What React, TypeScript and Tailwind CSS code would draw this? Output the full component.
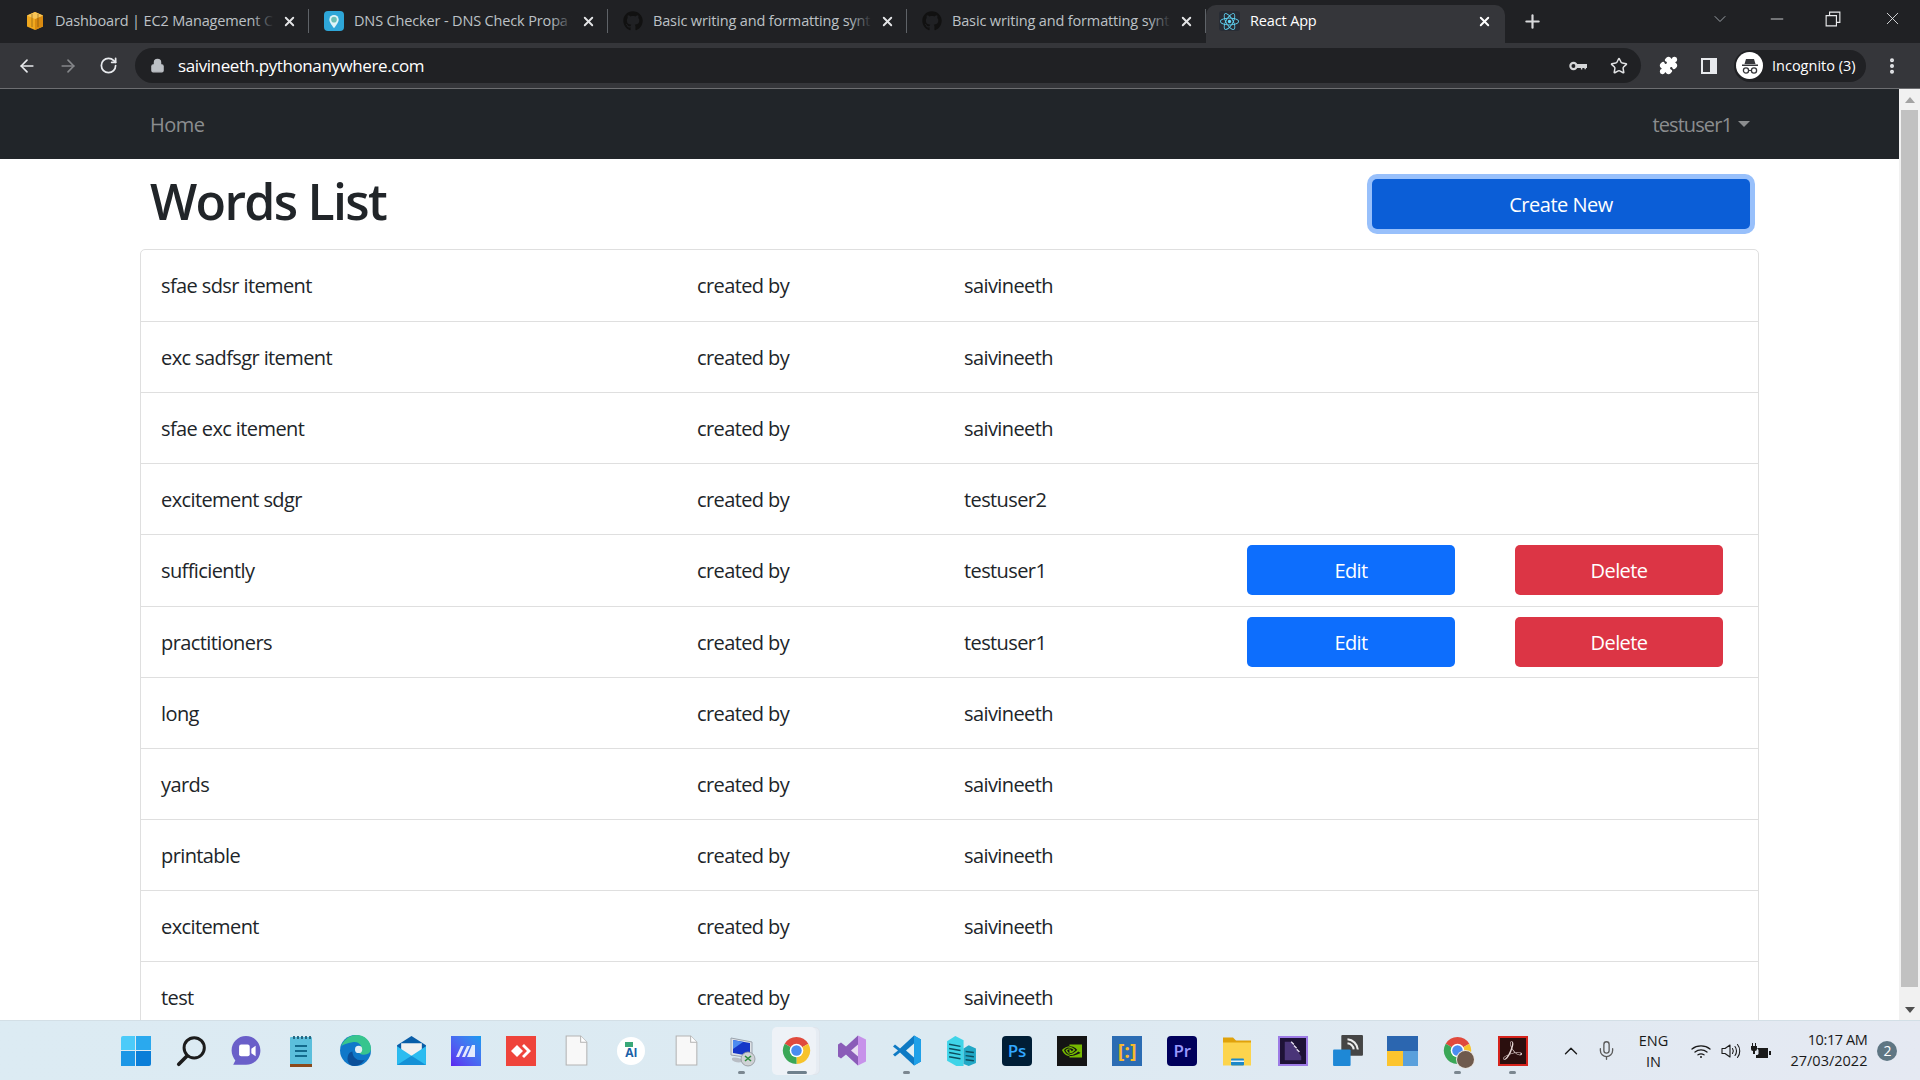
import { ArrowLeft, ArrowRight, RotateCw, Lock, Star, Puzzle, EllipsisVertical, X, Plus, ChevronDown, ChevronUp, Minus, Mic } from "lucide-react";
import { FaGithub, FaReact } from "react-icons/fa";
import { SiNvidia, SiAdobeacrobatreader } from "react-icons/si";

const words = [
  { word: "sfae sdsr itement", user: "saivineeth", tall: true },
  { word: "exc sadfsgr itement", user: "saivineeth" },
  { word: "sfae exc itement", user: "saivineeth" },
  { word: "excitement sdgr", user: "testuser2" },
  { word: "sufficiently", user: "testuser1", own: true, tall: true },
  { word: "practitioners", user: "testuser1", own: true },
  { word: "long", user: "saivineeth" },
  { word: "yards", user: "saivineeth" },
  { word: "printable", user: "saivineeth" },
  { word: "excitement", user: "saivineeth" },
  { word: "test", user: "saivineeth" },
];

const AwsIcon = () => (
  <svg viewBox="0 0 20 20" className="h-[20px] w-[20px]">
    <path d="M10 1 18 4.500V15.500L10 19 2 15.500V4.500Z" fill="#f0a81e" />
    <path d="M10 8V19L18 15.500V4.500Z" fill="#d98a10" />
    <path d="M2 4.500 10 1 18 4.500 10 8Z" fill="#f8c555" />
    <path d="M7 3v13M13 3v13" stroke="#5b3d0a" strokeWidth="0.8" opacity="0.6" />
  </svg>
);

const DnsIcon = () => (
  <div className="flex h-[20px] w-[20px] items-center justify-center rounded-[4px] bg-[#2ea6d8]">
    <svg viewBox="0 0 12 16" className="h-[15px] w-[12px]">
      <path d="M6 1a5 5 0 0 1 5 5c0 3-5 9-5 9S1 9 1 6a5 5 0 0 1 5-5Z" fill="#dff4f8" />
      <circle cx="6" cy="6" r="3" fill="#6bbfb5" />
    </svg>
  </div>
);

const tabs = [
  { title: "Dashboard | EC2 Management C", icon: <AwsIcon /> },
  { title: "DNS Checker - DNS Check Propa", icon: <DnsIcon /> },
  { title: "Basic writing and formatting synt", icon: <FaGithub className="h-[20px] w-[20px] text-[#111]" /> },
  { title: "Basic writing and formatting synt", icon: <FaGithub className="h-[20px] w-[20px] text-[#111]" /> },
];

const TabStrip = () => (
  <div className="flex h-[43px] items-end bg-[#202124] pl-[10px]">
    {tabs.map((tab, i) => (
      <div key={i} className="flex h-[38px] w-[299px] items-center pb-[6px] pl-[14px]">
        <div className="flex w-[21px] shrink-0 justify-center">{tab.icon}</div>
        <div className="relative ml-[10px] w-[219px] overflow-hidden whitespace-nowrap text-[14.5px] tracking-[-0.15px] text-[#bdc1c6]">
          {tab.title}
          <div className="absolute inset-y-0 right-0 w-[22px] bg-gradient-to-r from-transparent to-[#202124]" />
        </div>
        <X className="ml-auto h-[15px] w-[15px] text-[#e3e4e6]" strokeWidth={3} />
        <div className="ml-[11px] h-[24px] w-px shrink-0 bg-[#5f6368]" />
      </div>
    ))}
    <div className="flex h-[38px] w-[299px] items-center rounded-t-[10px] bg-[#35363a] pb-[6px] pl-[13px] pr-[10px]">
      <div className="flex h-[20px] w-[21px] shrink-0 items-center justify-center rounded-[3px] bg-[#282c34]">
        <FaReact className="h-[19px] w-[19px] text-[#61dafb]" />
      </div>
      <span className="ml-[10px] text-[14.5px] tracking-[-0.15px] text-white">React App</span>
      <X className="ml-auto mr-[3px] h-[15px] w-[15px] text-white" strokeWidth={3} />
    </div>
    <div className="flex h-[38px] w-[54px] items-center justify-center pb-[6px]">
      <Plus className="h-[21px] w-[21px] text-[#d8d9db]" strokeWidth={2.5} />
    </div>
    <div className="ml-auto flex h-[43px] items-center pb-[6px] text-[#e8e9eb]">
      <ChevronDown className="mr-[37px] h-[20px] w-[20px] text-[#9aa0a6]" strokeWidth={1.2} />
      <Minus className="mr-[38px] h-[20px] w-[20px]" strokeWidth={1} />
      <svg viewBox="0 0 14 14" className="mr-[41px] h-[16px] w-[16px]" fill="none" stroke="currentColor">
        <path d="M1 4h9v9H1zM4 4V1h9v9h-3" />
      </svg>
      <X className="mr-[17px] h-[21px] w-[21px]" strokeWidth={1} />
    </div>
  </div>
);

const Toolbar = () => (
  <div className="flex h-[46px] items-center border-b border-[#6d6e71] bg-[#35363a] pl-[17px] text-[#e8eaed]">
    <ArrowLeft className="h-[20px] w-[20px]" strokeWidth={2} />
    <ArrowRight className="ml-[21px] h-[20px] w-[20px] text-[#85878a]" strokeWidth={2} />
    <RotateCw className="ml-[21px] h-[19px] w-[19px]" strokeWidth={2.2} />
    <div className="ml-[17px] flex h-[35px] w-[1506px] items-center rounded-full bg-[#202124] pl-[15px]">
      <Lock className="h-[15px] w-[15px] text-[#bdc1c6]" fill="#bdc1c6" strokeWidth={2} />
      <span className="ml-[13px] text-[17px] tracking-[-0.4px] text-white">saivineeth.pythonanywhere.com</span>
      <svg viewBox="0 0 20 12" className="ml-auto h-[12px] w-[18px] text-[#d6d7d9]" fill="none" stroke="currentColor">
        <circle cx="5" cy="6" r="3.500" strokeWidth="2.400" />
        <path d="M8 4.500h11.500v3H8zM14 7v3M18 7v2.500" fill="currentColor" strokeWidth="1.600" />
      </svg>
      <Star className="ml-[23px] mr-[13px] h-[18px] w-[18px] text-[#e2e3e5]" strokeWidth={2} />
    </div>
    <Puzzle className="ml-[18px] h-[19px] w-[19px] text-white" fill="white" />
    <svg viewBox="0 0 16 16" className="ml-[23px] h-[16px] w-[16px]">
      <path d="M0 0h16v16H0z" fill="#e8eaed" />
      <path d="M2 2h7v12H2z" fill="#35363a" />
    </svg>
    <div className="ml-[17px] flex h-[32px] w-[132px] items-center rounded-full bg-[#202124] pl-[2px]">
      <div className="flex h-[27px] w-[27px] items-center justify-center rounded-full bg-white">
        <svg viewBox="0 0 20 20" className="h-[20px] w-[20px]" fill="#35363a">
          <path d="M6 3h8l1.500 5h-11zM2 8.500h16V10H2z" />
          <circle cx="6" cy="14.500" r="2.600" fill="none" stroke="#35363a" strokeWidth="1.300" />
          <circle cx="14" cy="14.500" r="2.600" fill="none" stroke="#35363a" strokeWidth="1.300" />
          <path d="M8.500 14h3v1h-3z" />
        </svg>
      </div>
      <span className="ml-[9px] text-[14.5px] text-white">Incognito (3)</span>
    </div>
    <EllipsisVertical className="ml-[16px] h-[20px] w-[20px]" strokeWidth={2.8} />
  </div>
);

const Navbar = () => (
  <div className="flex h-[70px] items-center bg-[#212529] pl-[150px] pr-[149px] text-[20px] tracking-[-0.5px] text-[#8b8d8f]">
    <span className="pt-[2px]">Home</span>
    <span className="ml-auto pt-[2px] tracking-[-0.9px]">testuser1</span>
    <span className="ml-[6px] h-0 w-0 border-x-[6px] border-t-[6px] border-x-transparent border-t-[#8b8d8f]" />
  </div>
);

const Row = ({ word, user, own, tall }: { word: string; user: string; own?: boolean; tall?: boolean }) => (
  <div className={`flex items-center border-b border-[#dfdfdf] pl-[20px] text-[20px] tracking-[-0.6px] text-[#212529] ${tall ? "h-[72px] pb-[1px]" : "h-[71px]"}`}>
    <div className="w-[536px] shrink-0 pt-[2px]">{word}</div>
    <div className="w-[267px] shrink-0 pt-[2px]">created by</div>
    <div className="w-[283px] shrink-0 pt-[2px]">{user}</div>
    {own && (
      <>
        <button className="h-[50px] w-[208px] rounded-[5px] bg-[#0d6efd] pt-[2px] text-white">Edit</button>
        <button className="ml-[60px] h-[50px] w-[208px] rounded-[5px] bg-[#dc3545] pt-[2px] text-white">Delete</button>
      </>
    )}
  </div>
);

const Scrollbar = () => (
  <div className="flex w-[21px] shrink-0 flex-col items-center bg-[#f1f1f1]">
    <div className="flex h-[21px] items-center justify-center">
      <span className="h-0 w-0 border-x-[5px] border-b-[6px] border-x-transparent border-b-[#a3a3a3]" />
    </div>
    <div className="ml-[2px] mr-[2px] h-[877px] self-stretch bg-[#c1c1c1]" />
    <div className="flex-1" />
    <div className="flex h-[21px] items-center justify-center">
      <span className="h-0 w-0 border-x-[5px] border-t-[6px] border-x-transparent border-t-[#505050]" />
    </div>
  </div>
);

const WinLogo = () => (
  <div className="grid h-[30px] w-[30px] grid-cols-2 gap-[1px]">
    <div className="rounded-tl-[2px] bg-[#4ccbf9]" />
    <div className="bg-[#2aa9ee]" />
    <div className="bg-[#1c97e6]" />
    <div className="rounded-br-[2px] bg-[#0a7ed8]" />
  </div>
);

const SearchGlyph = () => (
  <svg viewBox="0 0 30 30" className="h-[32px] w-[32px]" fill="none" stroke="#1c1c1c" strokeLinecap="round">
    <circle cx="18" cy="12" r="9.500" strokeWidth="2.800" />
    <path d="M11 20 3.500 27.500" strokeWidth="3.400" />
  </svg>
);

const ChatGlyph = () => (
  <svg viewBox="0 0 30 30" className="h-[32px] w-[32px]">
    <path d="M15 1c7.500 0 13.500 6 13.500 13.500S22.500 28 15 28H3l2-4C3 21 1.500 18 1.500 14.500 1.500 7 7.500 1 15 1Z" fill="#6a5fc9" />
    <rect x="8.500" y="9" width="10" height="11" rx="2" fill="#fff" />
    <path d="m20 13 4-3v10l-4-3z" fill="#fff" />
  </svg>
);

const NotepadGlyph = () => (
  <svg viewBox="0 0 24 32" className="h-[32px] w-[24px]">
    <rect x="1" y="2" width="22" height="29" rx="1" fill="#5bbfdc" />
    <rect x="1" y="29" width="22" height="3" fill="#8b4a1c" />
    <path d="M5 1v3M9 1v3M13 1v3M17 1v3M21 1v3" stroke="#1b5f7a" strokeWidth="1.800" />
    <path d="M6 11h12M6 16h12M6 21h12" stroke="#136a8c" strokeWidth="2" />
  </svg>
);

const EdgeGlyph = () => (
  <svg viewBox="0 0 32 32" className="h-[33px] w-[33px]">
    <circle cx="16" cy="16" r="15" fill="#0f78c9" />
    <path d="M2 12C5 4 12 1 17 1c8 0 14 6 14 13 0 4-3 6-7 6-3 0-5-1-5-3 0-3 3-3 2-6-1-2-4-4-8-3-5 1-9 2-11 4Z" fill="#37c58e" />
    <path d="M13 17c0 6 5 10 12 8-3 4-6 6-10 6-6 0-8-6-6-11 1-2 3-3 4-3Z" fill="#0b4f99" />
    <circle cx="19" cy="15" r="3.500" fill="#e3edf4" />
  </svg>
);

const MailGlyph = () => (
  <svg viewBox="0 0 30 30" className="h-[31px] w-[31px]">
    <path d="M15 1 29 10v19H1V10Z" fill="#0a5ea8" />
    <path d="M5 8h20v9l-10 6-10-6Z" fill="#f1f1f1" />
    <path d="M1 11 15 20 29 11v18H1Z" fill="#2cbcf0" />
    <path d="M15 20 29 29H1Z" fill="#1491d6" />
  </svg>
);

const PlainFile = () => (
  <svg viewBox="0 0 22 30" className="h-[31px] w-[23px]">
    <path d="M1 1h14l6 6v22H1Z" fill="#f8f8f8" stroke="#b3b3b3" />
    <path d="M15 1v6h6" fill="#fff" stroke="#b3b3b3" />
  </svg>
);

const SlashLogo = () => (
  <div className="h-[30px] w-[30px] bg-gradient-to-tr from-[#5a22f0] to-[#0f9bf0]">
    <svg viewBox="0 0 30 30" className="h-[30px] w-[30px]" fill="#fff">
      <path d="M10 10h3l-5 11H5ZM16 10h3l-5 11h-3ZM21 9h3v12h-8Z" opacity="0.85" />
    </svg>
  </div>
);

const AnyDeskGlyph = () => (
  <svg viewBox="0 0 30 30" className="h-[30px] w-[30px]">
    <rect width="30" height="30" fill="#ef443b" />
    <path d="m11 9 6 6-6 6-6-6Z" fill="#fff" />
    <path d="m18 8 7 7-7 7-2-2 5-5-5-5Z" fill="#fff" />
  </svg>
);

const RemoteGlyph = () => (
  <svg viewBox="0 0 30 32" className="h-[32px] w-[30px]">
    <path d="M4 3 25 7v16L4 20Z" fill="#dfe3e8" stroke="#9aa3ad" />
    <path d="M6 5 23 8v13L6 18Z" fill="#1536c8" />
    <path d="M6 5 16 7 6 14Z" fill="#4d8bf0" />
    <path d="M5 23c4-1 8 0 10 2v2c-4 1-8 0-10-2Z" fill="#b8bdc4" />
    <circle cx="21" cy="24" r="7" fill="#cfd2d5" stroke="#8d9298" strokeWidth="0.800" />
    <path d="m18 26 6-5M18 21l6 5" stroke="#2e8b3d" strokeWidth="1.600" />
  </svg>
);

const AiBadge = () => (
  <div className="relative flex h-[28px] w-[28px] items-center justify-center rounded-full bg-white text-[12px] font-bold text-[#1c5fa8]">
    <span className="absolute left-[8px] top-[5px] h-[5px] w-[8px] bg-[#3aa878]" />
    <span className="pt-[5px]">AI</span>
  </div>
);

const ChromeGlyph = ({ avatar }: { avatar?: boolean }) => (
  <div className="relative h-[29px] w-[29px]">
    <svg viewBox="0 0 32 32" className="h-[29px] w-[29px]">
      <path d="M16 16 3 8.500A15 15 0 0 1 29 8.500Z" fill="#e04a3d" />
      <path d="M16 16 29 8.500A15 15 0 0 1 16 31Z" fill="#f7c32c" />
      <path d="M16 16 16 31A15 15 0 0 1 3 8.500Z" fill="#3aa757" />
      <circle cx="16" cy="16" r="7.500" fill="#fff" />
      <circle cx="16" cy="16" r="5.800" fill="#4a8cf0" />
    </svg>
    {avatar && <div className="absolute -bottom-[3px] -right-[2px] h-[17px] w-[17px] rounded-full bg-[#6f5a4d] ring-1 ring-[#e8e4df]" />}
  </div>
);

const VsGlyph = () => (
  <svg viewBox="0 0 30 32" className="h-[33px] w-[30px]">
    <path d="M21 1 29 5v22l-8 4-12-11 4-4Z" fill="#c792ea" />
    <path d="M21 1 9 12 4 8 1 10v12l3 2 5-4L21 31Z" fill="#8a5cb8" />
    <path d="M21 10v12l-7-6Z" fill="#e8e0f2" />
  </svg>
);

const VsCodeGlyph = () => (
  <svg viewBox="0 0 30 32" className="h-[33px] w-[30px]">
    <path d="M22 1 29 5v22l-7 4L8 18l-5 4-2-2 5-4-5-4 2-2 5 4Z" fill="#0e7ac4" />
    <path d="M22 1 29 5v22l-7 4Z" fill="#1fa0e8" />
    <path d="M22 9v14l-8-7Z" fill="#e0eef4" />
  </svg>
);

const BuildingsGlyph = () => (
  <svg viewBox="0 0 30 32" className="h-[33px] w-[31px]">
    <path d="M1 7 9 2l8 4v25l-7 0-9-5Z" fill="#3fd4e8" />
    <path d="M17 14l5-3 7 3v14l-7 3-5-2Z" fill="#22a8c6" />
    <path d="M3 10l11 2M3 14l11 2M3 18l11 2M3 22l11 2M19 17l8 1M19 21l8 1M19 25l8 1" stroke="#0d4d5e" strokeWidth="1.400" />
  </svg>
);

const BoxLabel = ({ text, color }: { text: string; color: string }) => (
  <div className={`flex h-[30px] w-[30px] items-center justify-center rounded-[4px] text-[17px] font-semibold ${color}`}>{text}</div>
);

const BracketsGlyph = () => (
  <div className="flex h-[30px] w-[30px] items-center justify-center bg-[#2b6cb3] text-[20px] font-bold text-[#f7b92c]">[:]</div>
);

const FolderGlyph = () => (
  <svg viewBox="0 0 30 32" className="h-[33px] w-[30px]">
    <path d="M1 3h10l3 3h15v6H1Z" fill="#e0a20b" />
    <path d="M1 8h28v23H1Z" fill="#fcd44d" />
    <rect x="9" y="24" width="13" height="7" rx="1" fill="#1c88c9" />
    <rect x="9" y="26" width="13" height="1.500" fill="#e5f3fa" />
  </svg>
);

const ClapGlyph = () => (
  <div className="h-[30px] w-[30px] border-2 border-[#9d7be6] bg-[#1e1236] p-[2px]">
    <svg viewBox="0 0 24 24" className="h-full w-full">
      <path d="M3 2h7l11 16v4H3Z" fill="#4a3578" />
      <path d="M10 2l3 3M13 6l3 3M16 10l3 3" stroke="#e8e0f2" strokeWidth="1.500" />
    </svg>
  </div>
);

const CastGlyph = () => (
  <svg viewBox="0 0 30 32" className="h-[33px] w-[31px]">
    <rect x="9" y="1" width="21" height="20" rx="1" fill="#454545" />
    <path d="M15 5a11 11 0 0 1 10 10M15 9a7 7 0 0 1 6 6" stroke="#eee" strokeWidth="2" fill="none" />
    <rect x="1" y="15" width="17" height="16" rx="1" fill="#1e88d6" />
  </svg>
);

const SquaresGlyph = () => (
  <div className="flex h-[30px] w-[31px] flex-col">
    <div className="flex-1 bg-[#2b66b0]" />
    <div className="flex flex-1">
      <div className="flex-1 bg-[#fcc42e]" />
      <div className="flex-1 bg-[#5aa0dc]" />
    </div>
  </div>
);

const WifiGlyph = () => (
  <svg viewBox="0 0 20 14" className="h-[14px] w-[20px]" fill="none" stroke="#1a1a1a" strokeWidth="1.300" strokeLinecap="round">
    <path d="M1 5C6 .8 14 .8 19 5M4 8c3.500-2.800 8.500-2.800 12 0M7 10.800c1.800-1.200 4.200-1.200 6 0" />
    <circle cx="10" cy="13" r="1" fill="#1a1a1a" stroke="none" />
  </svg>
);

const VolumeGlyph = () => (
  <svg viewBox="0 0 20 16" className="h-[16px] w-[20px]" fill="none" stroke="#1a1a1a" strokeWidth="1.100" strokeLinecap="round" strokeLinejoin="round">
    <path d="M1 5.500h3L9 2v12l-5-3.500H1z" />
    <path d="M11.500 5.500c1 1.500 1 3.500 0 5M14 3.500c2 2.500 2 6.500 0 9M16.500 1.500c3 3.500 3 9.500 0 13" />
  </svg>
);

const BatteryGlyph = () => (
  <svg viewBox="0 0 20 16" className="h-[16px] w-[20px]" fill="#1a1a1a">
    <path d="M1 0h1v3H1zM4 0h1v3H4zM0 3h6v3a2 2 0 0 1-2 2v3H2V8a2 2 0 0 1-2-2z" />
    <path d="M6 5h11v10H5v-3h1.500l1-1V7z" />
    <rect x="18" y="8" width="2" height="4" />
  </svg>
);

const taskIcons = [
  { icon: <WinLogo /> },
  { icon: <SearchGlyph /> },
  { icon: <ChatGlyph /> },
  { icon: <NotepadGlyph /> },
  { icon: <EdgeGlyph /> },
  { icon: <MailGlyph /> },
  { icon: <SlashLogo /> },
  { icon: <AnyDeskGlyph /> },
  { icon: <PlainFile /> },
  { icon: <AiBadge /> },
  { icon: <PlainFile /> },
  { icon: <RemoteGlyph />, dot: "small" },
  { icon: <ChromeGlyph />, dot: "wide", active: true },
  { icon: <VsGlyph /> },
  { icon: <VsCodeGlyph />, dot: "small" },
  { icon: <BuildingsGlyph /> },
  { icon: <BoxLabel text="Ps" color="bg-[#001e36] text-[#31a8ff]" /> },
  { icon: <div className="flex h-[30px] w-[30px] items-center justify-center bg-[#141414]"><SiNvidia className="h-[20px] w-[20px] text-[#76b900]" /></div> },
  { icon: <BracketsGlyph /> },
  { icon: <BoxLabel text="Pr" color="bg-[#00005b] text-[#9999ff]" /> },
  { icon: <FolderGlyph /> },
  { icon: <ClapGlyph /> },
  { icon: <CastGlyph /> },
  { icon: <SquaresGlyph /> },
  { icon: <ChromeGlyph avatar />, dot: "small" },
  { icon: <div className="flex h-[30px] w-[30px] items-center justify-center border-2 border-[#d6231c] bg-[#2b0f0e]"><SiAdobeacrobatreader className="h-[19px] w-[19px] text-[#e8d8d6]" /></div>, dot: "small" },
];

const Taskbar = () => (
  <div className="flex h-[60px] shrink-0 items-center border-t border-[#d3dfe6] bg-gradient-to-r from-[#dcebf3] via-[#dceaf2] to-[#e5e9f2] pl-[108px] text-[#1a1a1a]">
    {taskIcons.map((t, i) => (
      <div key={i} className="relative flex h-[50px] w-[55.100px] items-center justify-center">
        {t.active && <div className="absolute left-[7px] top-[1px] h-[48px] w-[44px] rounded-[5px] border border-[#dfe5ec] bg-[#e6ecf3]" />}
        {t.active && <div className="absolute left-[3px] top-[1px] h-[48px] w-[44px] rounded-[5px] bg-[#eef2f7]" />}
        <div className="relative">{t.icon}</div>
        {t.dot === "small" && <div className="absolute bottom-[2px] h-[3px] w-[7px] rounded-full bg-[#7b8790]" />}
        {t.dot === "wide" && <div className="absolute bottom-[2px] h-[3px] w-[20px] rounded-full bg-[#6f808c]" />}
      </div>
    ))}
    <ChevronUp className="ml-[20px] h-[22px] w-[22px]" strokeWidth={1.5} />
    <Mic className="ml-[14px] h-[21px] w-[21px] text-[#5a5a5a]" strokeWidth={1.5} />
    <div className="ml-[16px] flex w-[40px] flex-col items-center text-[14.5px] leading-[21px]">
      <span>ENG</span>
      <span>IN</span>
    </div>
    <div className="ml-[18px]"><WifiGlyph /></div>
    <div className="ml-[10px]"><VolumeGlyph /></div>
    <div className="ml-[10px]"><BatteryGlyph /></div>
    <div className="mb-[2px] ml-[15px] flex w-[81px] flex-col items-end text-[14.5px] leading-[21px]">
      <span className="tracking-[-0.4px]">10:17 AM</span>
      <span>27/03/2022</span>
    </div>
    <div className="ml-[10px] flex h-[20px] w-[20px] items-center justify-center rounded-full bg-[#5f7683] text-[14px] text-white">2</div>
  </div>
);

const App = () => {
  return (
    <div className="flex h-screen w-full flex-col overflow-hidden bg-white font-['Open_Sans','Noto_Sans',sans-serif]">
      <TabStrip />
      <Toolbar />
      <div className="flex min-h-0 flex-1">
        <div className="min-w-0 flex-1 overflow-hidden">
          <Navbar />
          <div className="mx-auto w-[1619px]">
            <div className="flex h-[90px] items-center justify-between pl-[10px] pr-[9px]">
              <h1 className="mb-[6px] text-[50px] font-semibold tracking-[-1.7px] text-[#212529]">Words List</h1>
              <button className="h-[50px] w-[378px] rounded-[5px] bg-[#0b5ed7] pt-[2px] text-[20px] tracking-[-0.5px] text-white ring-[5px] ring-[#98c0fb]">Create New</button>
            </div>
            <div className="rounded-t-[5px] border border-[#dfdfdf]">
              {words.map((w) => (
                <Row key={w.word} word={w.word} user={w.user} own={w.own} tall={w.tall} />
              ))}
            </div>
          </div>
        </div>
        <Scrollbar />
      </div>
      <Taskbar />
    </div>
  );
};

export default App;
